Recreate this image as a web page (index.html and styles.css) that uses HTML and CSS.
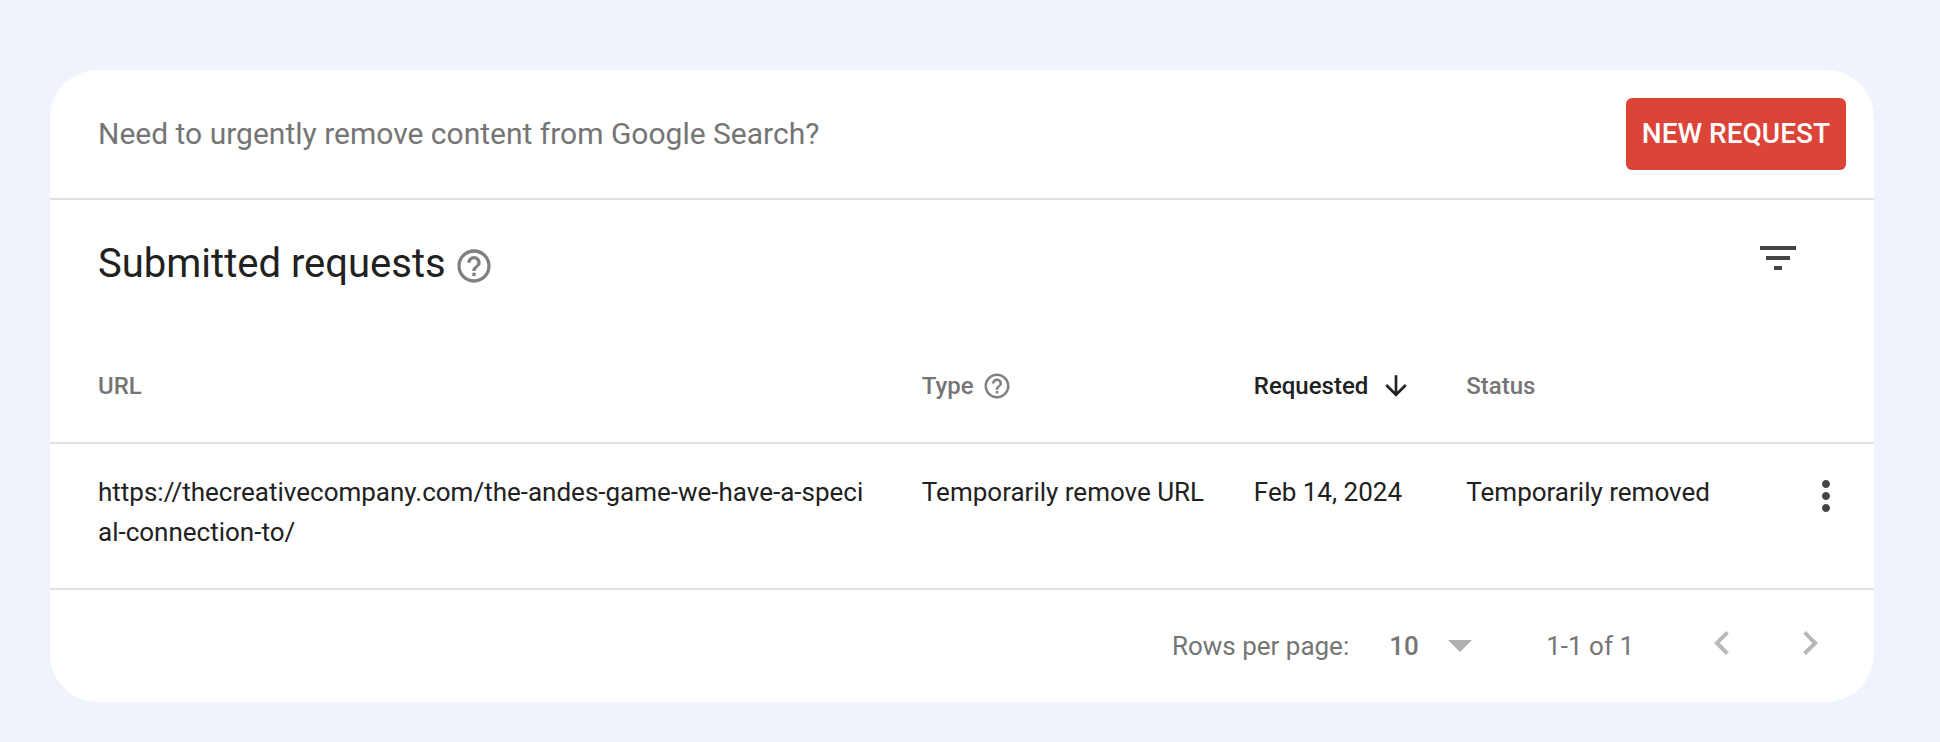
FILE: index.html
```html
<!DOCTYPE html>
<html lang="en">
<head>
<meta charset="utf-8">
<title>Removals</title>
<link rel="stylesheet" href="styles.css">
</head>
<body>
<main class="card">
  <section class="banner">
    <p class="banner-text">Need to urgently remove content from Google Search?</p>
    <button class="new-request" type="button">NEW REQUEST</button>
  </section>

  <header class="heading">
    <h1 class="title">Submitted requests</h1>
    <button class="icon-button title-help" type="button" aria-label="About submitted requests">
      <svg class="icon-help-large" viewBox="0 0 24 24"><path d="M11 18h2v-2h-2v2zm1-16C6.480 2 2 6.480 2 12s4.480 10 10 10 10-4.480 10-10S17.520 2 12 2zm0 18c-4.410 0-8-3.590-8-8s3.590-8 8-8 8 3.590 8 8-3.590 8-8 8zm0-14c-2.210 0-4 1.790-4 4h2c0-1.100.9-2 2-2s2 .9 2 2c0 2-3 1.750-3 5h2c0-2.250 3-2.500 3-5 0-2.210-1.790-4-4-4z"/></svg>
    </button>
    <button class="icon-button filter" type="button" aria-label="Filter">
      <svg class="icon" viewBox="0 0 24 24"><path d="M10 18h4v-2h-4v2zM3 6v2h18V6H3zm3 7h12v-2H6v2z"/></svg>
    </button>
  </header>

  <table class="requests">
    <colgroup>
      <col class="col-url"><col class="col-type"><col class="col-requested"><col class="col-status"><col class="col-actions">
    </colgroup>
    <thead>
      <tr>
        <th scope="col">URL</th>
        <th scope="col">
          <span class="column-label">Type
            <button class="icon-button" type="button" aria-label="About type">
              <svg class="icon-help" viewBox="0 0 24 24"><path d="M11 18h2v-2h-2v2zm1-16C6.480 2 2 6.480 2 12s4.480 10 10 10 10-4.480 10-10S17.520 2 12 2zm0 18c-4.410 0-8-3.590-8-8s3.590-8 8-8 8 3.590 8 8-3.590 8-8 8zm0-14c-2.210 0-4 1.790-4 4h2c0-1.100.9-2 2-2s2 .9 2 2c0 2-3 1.750-3 5h2c0-2.250 3-2.500 3-5 0-2.210-1.790-4-4-4z"/></svg>
            </button>
          </span>
        </th>
        <th scope="col" aria-sort="descending">
          <button class="sort" type="button">Requested
            <svg class="icon-sort" viewBox="0 0 24 24"><path d="M20 12l-1.410-1.410L13 16.170V4h-2v12.170l-5.580-5.590L4 12l8 8 8-8z"/></svg>
          </button>
        </th>
        <th scope="col">Status</th>
        <td></td>
      </tr>
    </thead>
    <tbody>
      <tr>
        <td class="url">https://thecreativecompany.com/the-andes-game-we-have-a-special-connection-to/</td>
        <td>Temporarily remove URL</td>
        <td>Feb 14, 2024</td>
        <td>Temporarily removed</td>
        <td>
          <button class="icon-button" type="button" aria-label="More options">
            <svg class="icon" viewBox="0 0 24 24"><path d="M12 8c1.100 0 2-.9 2-2s-.9-2-2-2-2 .9-2 2 .9 2 2 2zm0 2c-1.100 0-2 .9-2 2s.9 2 2 2 2-.9 2-2-.9-2-2-2zm0 6c-1.100 0-2 .9-2 2s.9 2 2 2 2-.9 2-2-.9-2-2-2z"/></svg>
          </button>
        </td>
      </tr>
    </tbody>
  </table>

  <footer class="pager">
    <label class="rows-label" for="rows">Rows per page:</label>
    <span class="rows-field">
      <select class="rows" id="rows"><option>10</option><option>25</option><option>50</option></select>
      <svg class="icon-drop" viewBox="0 0 24 12"><path d="M0 0h24L12 12z"/></svg>
    </span>
    <span class="range">1-1 of 1</span>
    <nav class="pages" aria-label="Pages">
      <button class="icon-button" type="button" aria-label="Previous page" disabled>
        <svg class="icon" viewBox="0 0 24 24"><path d="M15.410 7.410L14 6l-6 6 6 6 1.410-1.410L10.830 12z"/></svg>
      </button>
      <button class="icon-button" type="button" aria-label="Next page" disabled>
        <svg class="icon" viewBox="0 0 24 24"><path d="M10 6L8.590 7.410 13.170 12l-4.580 4.590L10 18l6-6z"/></svg>
      </button>
    </nav>
  </footer>
</main>
</body>
</html>
```
FILE: styles.css
```css
* {
  box-sizing: border-box;
}

body {
  margin: 0;
  padding: 70px 66px 40px 50px;
  background: #eff3fb;
  color: #212121;
  font-family: Roboto, "Liberation Sans", sans-serif;
  font-size: 26px;
  line-height: 40px;
}

button,
select {
  margin: 0;
  padding: 0;
  border: 0;
  background: none;
  color: inherit;
  font: inherit;
}

svg {
  display: block;
  fill: currentColor;
}

.card {
  overflow: hidden;
  border-radius: 48px;
  background: #fff;
}

.banner {
  display: flex;
  align-items: center;
  justify-content: space-between;
  padding: 28px 28px 28px 48px;
  border-bottom: 2px solid #e0e0e0;
}

.banner-text {
  margin: 0;
  color: #757575;
  font-size: 30px;
}

.new-request {
  padding: 16px;
  border-radius: 6px;
  background: #db4437;
  color: #fff;
  font-size: 28px;
  font-weight: 500;
}

.heading {
  display: flex;
  align-items: flex-start;
  padding: 34px 72px 36px 48px;
}

.title {
  margin: 0;
  font-size: 40px;
  font-weight: 400;
  line-height: 60px;
}

.icon-button {
  display: block;
  flex: none;
}

.title-help {
  margin: 12px 0 0 8px;
  color: #808080;
}

.filter {
  margin-left: auto;
  color: #444;
}

.icon {
  width: 48px;
  height: 48px;
}

.icon-help-large {
  width: 40px;
  height: 40px;
}

.icon-help {
  width: 30px;
  height: 30px;
}

.icon-sort {
  width: 32px;
  height: 32px;
}

.icon-drop {
  width: 24px;
  height: 12px;
}

.requests {
  width: 100%;
  border-collapse: separate;
  border-spacing: 0;
  table-layout: fixed;
}

.col-url {
  width: 47.8%;
}

.col-type {
  width: 18.2%;
}

.col-requested {
  width: 11.65%;
}

.col-status {
  width: 18.4%;
}

.requests th,
.requests td {
  padding: 28px 0;
  border-bottom: 2px solid #e0e0e0;
  text-align: left;
  vertical-align: top;
}

.requests th {
  padding: 36px 0;
  color: #757575;
  font-size: 24px;
  font-weight: 500;
}

.requests th:first-child,
.requests td:first-child {
  padding-right: 48px;
  padding-left: 48px;
}

.requests .url {
  padding-bottom: 36px;
  word-break: break-all;
}

.requests .icon-button {
  color: #444;
}

.requests .column-label .icon-button {
  color: #808080;
}

.column-label,
.sort {
  display: flex;
  align-items: center;
  gap: 8px;
}

.sort {
  gap: 12px;
  color: #212121;
}

.pager {
  display: flex;
  align-items: center;
  justify-content: flex-end;
  padding: 29px 40px 29px 48px;
  color: #757575;
}

.rows-field {
  display: grid;
  align-items: center;
  width: 83px;
  margin: 0 74px 0 40px;
}

.rows {
  grid-area: 1 / 1;
  width: 100%;
  appearance: none;
  font-weight: 500;
}

.icon-drop {
  grid-area: 1 / 1;
  justify-self: end;
  color: #b0b0b0;
  pointer-events: none;
}

.pages {
  display: flex;
  gap: 40px;
  margin-left: 64px;
  padding-bottom: 6px;
  color: #b8b8b8;
}
```
